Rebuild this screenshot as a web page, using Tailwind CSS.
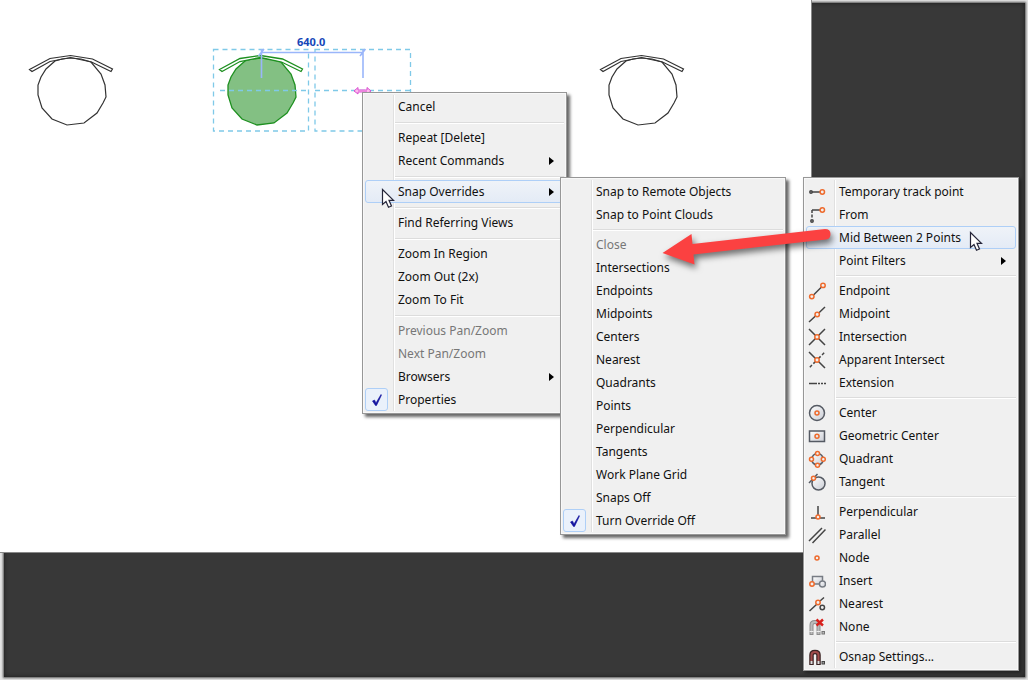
<!DOCTYPE html>
<html lang="en">
<head>
<meta charset="utf-8">
<title>Snap overrides</title>
<script src="https://cdn.jsdelivr.net/npm/@tailwindcss/browser@4"></script>
</head>
<body class="bg-[#e4e4e4] font-['Noto_Sans','Open_Sans',sans-serif] text-[12px] leading-4 text-[#111]">
<main class="relative flex h-screen flex-col overflow-hidden pt-[3px] pr-[3px] pb-[3px] pl-1">
  <div class="grow bg-[#383838] shadow-[0_0_2px_1px_#555] inset-shadow-[0_0_4px_#1c1c1c]"></div>
  <section class="absolute top-0 left-0 right-[216px] bottom-[127px] bg-white border-r border-b border-[#888]" aria-label="Drawing canvas">
    <svg class="block" width="811" height="550" viewBox="0 0 811 550" fill="none" aria-hidden="true">
      <defs>
        <g id="seat"><path d="M55 61 46 69 41 77 38 85V95L42 108 52 119 67 125 84 123 97 113 103 103 106 97 105 85 101 74 91 62 81 59 71 58 62 59Z"/></g>
        <g id="back"><path d="M29.500 69.500 50 58.500 70.500 55.500 92.500 59 112.500 69 111 71.500 91.500 62 70.500 57.500 50 61.500 32 71.500Z"/></g>
      </defs>
      <g stroke="#333" stroke-width="1.2"><use href="#seat"/><use href="#back"/></g>
      <g stroke="#333" stroke-width="1.2" transform="translate(571)"><use href="#seat"/><use href="#back"/></g>
      <g stroke="#1e9020" stroke-width="1.3" transform="translate(190)"><use href="#seat" fill="#83c083"/><use href="#back" fill="#fff"/></g>
      <g stroke="#7fc9e8" stroke-width="1.3" stroke-dasharray="5 4">
        <rect x="213.500" y="49.500" width="95" height="81.500"/>
        <rect x="315" y="49.500" width="95.500" height="81.500"/>
        <path d="M220 90.500H308M315 90.500H410"/>
      </g>
      <g stroke="#9ab6fa" stroke-width="1.6">
        <path d="M261 52.500H363M261.500 49V78M363 49V78M258.500 56 264 49M360 56 365.500 49"/>
      </g>
      <path d="M354 91 358 87.500V90H367V87.500L371 91 367 94V92H358V94Z" stroke="#d94fd0" fill="#fbe" />
      <text x="297" y="46" fill="#1546b8" class="font-['Noto_Sans','Open_Sans',sans-serif] text-[11px] font-bold">640.0</text>
    </svg>
  </section>

  <svg class="absolute size-0">
    <defs>
      <linearGradient id="metal" x1="0" y1="0" x2="1" y2="1"><stop offset="0" stop-color="#fff"/><stop offset="1" stop-color="#c9ccd4"/></linearGradient>
      <symbol id="cursor" viewBox="0 0 14 21"><path d="M1.500 1.500V16.500L5 13.500 7.500 19.300 10.500 18 8 12.300H12.500Z" fill="#fff" stroke="#26263a" stroke-width="1.200"/></symbol>
      <symbol id="check" viewBox="0 0 12 14"><path d="M1.500 8 3.500 7 5 10 10 1.500 10.500 2 5.500 12.500H4.500Z" fill="#1414a0" stroke="#1414a0" stroke-width=".6"/></symbol>
    </defs>
  </svg>

  <!-- Context menu -->
  <div role="menu" aria-label="Context menu" class="absolute top-[92px] left-[362px] w-[205px] border border-[#979797] bg-[#f0f0f0] p-0.5 shadow-[3px_3px_3px_#0009] inset-shadow-[0_0_0_1px_#f8f8f8]">
    <div class="absolute inset-y-0.5 left-[30px] w-0.5 border-l border-[#e0e0e0] bg-white"></div>
    <button role="menuitem" class="relative flex h-[23px] w-full items-center pl-[33px]">Cancel</button>
    <hr class="relative mt-1 mb-0.5 ml-[30px] h-0.5 border-t border-[#dcdcdc] bg-white">
    <button role="menuitem" class="relative flex h-[23px] w-full items-center pl-[33px]">Repeat [Delete]</button>
    <button role="menuitem" class="relative flex h-[23px] w-full items-center justify-between pr-2.5 pl-[33px]">Recent Commands<svg width="5" height="8" viewBox="0 0 5 8"><path d="M0 0 5 4 0 8Z"/></svg></button>
    <hr class="relative mt-1 mb-0.5 ml-[30px] h-0.5 border-t border-[#dcdcdc] bg-white">
    <button role="menuitem" class="relative flex h-[23px] w-full items-center justify-between rounded-[3px] border border-[#aecff7] bg-linear-to-b from-[#eff3f8] to-[#e4ebf6] pr-[9px] pl-8">Snap Overrides<svg width="5" height="8" viewBox="0 0 5 8"><path d="M0 0 5 4 0 8Z"/></svg></button>
    <hr class="relative mt-1 mb-0.5 ml-[30px] h-0.5 border-t border-[#dcdcdc] bg-white">
    <button role="menuitem" class="relative flex h-[23px] w-full items-center pl-[33px]">Find Referring Views</button>
    <hr class="relative mt-1 mb-0.5 ml-[30px] h-0.5 border-t border-[#dcdcdc] bg-white">
    <button role="menuitem" class="relative flex h-[23px] w-full items-center pl-[33px]">Zoom In Region</button>
    <button role="menuitem" class="relative flex h-[23px] w-full items-center pl-[33px]">Zoom Out (2x)</button>
    <button role="menuitem" class="relative flex h-[23px] w-full items-center pl-[33px]">Zoom To Fit</button>
    <hr class="relative mt-1 mb-0.5 ml-[30px] h-0.5 border-t border-[#dcdcdc] bg-white">
    <button role="menuitem" disabled class="relative flex h-[23px] w-full items-center pl-[33px] text-[#777]">Previous Pan/Zoom</button>
    <button role="menuitem" disabled class="relative flex h-[23px] w-full items-center pl-[33px] text-[#777]">Next Pan/Zoom</button>
    <button role="menuitem" class="relative flex h-[23px] w-full items-center justify-between pr-2.5 pl-[33px]">Browsers<svg width="5" height="8" viewBox="0 0 5 8"><path d="M0 0 5 4 0 8Z"/></svg></button>
    <button role="menuitemcheckbox" aria-checked="true" class="relative flex h-[23px] w-full items-center gap-2.5"><span class="flex size-[23px] items-center justify-center rounded-[3px] border border-[#aecff7] bg-[#eaf1fb]"><svg width="12" height="14"><use href="#check"/></svg></span>Properties</button>
  </div>

  <!-- Snap overrides submenu -->
  <div role="menu" aria-label="Snap Overrides" class="absolute top-[177px] left-[560px] w-[226px] border border-[#979797] bg-[#f0f0f0] p-0.5 shadow-[3px_3px_3px_#0009] inset-shadow-[0_0_0_1px_#f8f8f8]">
    <div class="absolute inset-y-0.5 left-[30px] w-0.5 border-l border-[#e0e0e0] bg-white"></div>
    <button role="menuitem" class="relative flex h-[23px] w-full items-center pl-[33px]">Snap to Remote Objects</button>
    <button role="menuitem" class="relative flex h-[23px] w-full items-center pl-[33px]">Snap to Point Clouds</button>
    <hr class="relative mt-[3px] mb-0.5 ml-[30px] h-0.5 border-t border-[#dcdcdc] bg-white">
    <button role="menuitem" disabled class="relative flex h-[23px] w-full items-center pl-[33px] text-[#777]">Close</button>
    <button role="menuitem" class="relative flex h-[23px] w-full items-center pl-[33px]">Intersections</button>
    <button role="menuitem" class="relative flex h-[23px] w-full items-center pl-[33px]">Endpoints</button>
    <button role="menuitem" class="relative flex h-[23px] w-full items-center pl-[33px]">Midpoints</button>
    <button role="menuitem" class="relative flex h-[23px] w-full items-center pl-[33px]">Centers</button>
    <button role="menuitem" class="relative flex h-[23px] w-full items-center pl-[33px]">Nearest</button>
    <button role="menuitem" class="relative flex h-[23px] w-full items-center pl-[33px]">Quadrants</button>
    <button role="menuitem" class="relative flex h-[23px] w-full items-center pl-[33px]">Points</button>
    <button role="menuitem" class="relative flex h-[23px] w-full items-center pl-[33px]">Perpendicular</button>
    <button role="menuitem" class="relative flex h-[23px] w-full items-center pl-[33px]">Tangents</button>
    <button role="menuitem" class="relative flex h-[23px] w-full items-center pl-[33px]">Work Plane Grid</button>
    <button role="menuitem" class="relative flex h-[23px] w-full items-center pl-[33px]">Snaps Off</button>
    <button role="menuitemcheckbox" aria-checked="true" class="relative flex h-[23px] w-full items-center gap-2.5"><span class="flex size-[23px] items-center justify-center rounded-[3px] border border-[#aecff7] bg-[#eaf1fb]"><svg width="12" height="14"><use href="#check"/></svg></span>Turn Override Off</button>
  </div>

  <!-- Object snap menu -->
  <div role="menu" aria-label="Object snap" class="absolute top-[177px] left-[803px] w-[216px] border border-[#979797] bg-[#f0f0f0] p-0.5 shadow-[2px_2px_3px_#0006] inset-shadow-[0_0_0_1px_#f8f8f8]">
    <div class="absolute inset-y-0.5 left-[30px] w-0.5 border-l border-[#e0e0e0] bg-white"></div>
    <button role="menuitem" class="relative flex h-[23px] w-full items-center gap-[13px] pl-0.5"><svg width="18" height="18" fill="none" stroke="#444" stroke-width="1.5"><path d="M4 9H12"/><circle cx="3" cy="9" r="1.200"/><circle cx="14.300" cy="9" r="2.200" stroke="#ee6a2c"/></svg>Temporary track point</button>
    <button role="menuitem" class="relative flex h-[23px] w-full items-center gap-[13px] pl-0.5"><svg width="18" height="18" fill="none" stroke="#444" stroke-width="1.500"><path d="M12 4H4"/><path d="M4 4V13" stroke-dasharray="3 1.500"/><circle cx="4" cy="15" r="1.200"/><circle cx="14.300" cy="4" r="2.200" stroke="#ee6a2c"/></svg>From</button>
    <button role="menuitem" class="relative flex h-[23px] w-full items-center rounded-[3px] border border-[#aecff7] bg-linear-to-b from-[#eff3f8] to-[#e4ebf6] pl-8">Mid Between 2 Points</button>
    <button role="menuitem" class="relative flex h-[23px] w-full items-center justify-between pr-2.5 pl-[33px]">Point Filters<svg width="5" height="8" viewBox="0 0 5 8"><path d="M0 0 5 4 0 8Z"/></svg></button>
    <hr class="relative mt-[3px] mb-0.5 ml-[30px] h-0.5 border-t border-[#dcdcdc] bg-white">
    <button role="menuitem" class="relative flex h-[23px] w-full items-center gap-[13px] pl-0.5"><svg width="18" height="18" fill="none" stroke="#444" stroke-width="1.500"><path d="M5.500 13 13.500 5"/><g stroke="#ee6a2c"><circle cx="3.800" cy="14.600" r="2.200"/><circle cx="15" cy="3.400" r="2.200"/></g></svg>Endpoint</button>
    <button role="menuitem" class="relative flex h-[23px] w-full items-center gap-[13px] pl-0.5"><svg width="18" height="18" fill="none" stroke="#444" stroke-width="1.500"><path d="M1 17 7.500 11M11 7.700 17 2"/><circle cx="9.200" cy="9.500" r="2.200" stroke="#ee6a2c"/></svg>Midpoint</button>
    <button role="menuitem" class="relative flex h-[23px] w-full items-center gap-[13px] pl-0.5"><svg width="18" height="18" fill="none" stroke="#444" stroke-width="1.500"><path d="M1 1 7.500 7.500M10.500 10.500 17 17M1 17 7.500 10.500M10.500 7.500 17 1"/><circle cx="9" cy="9" r="2.200" stroke="#ee6a2c"/></svg>Intersection</button>
    <button role="menuitem" class="relative flex h-[23px] w-full items-center gap-[13px] pl-0.5"><svg width="18" height="18" fill="none" stroke="#444" stroke-width="1.500"><path d="M1 1 7.500 7.500M10.500 10.500 17 17"/><path d="M7.500 10.500 1 17M10.500 7.500 17 1" stroke-dasharray="3 2"/><circle cx="9" cy="9" r="2.200" stroke="#ee6a2c"/></svg>Apparent Intersect</button>
    <button role="menuitem" class="relative flex h-[23px] w-full items-center gap-[13px] pl-0.5"><svg width="18" height="18" fill="none" stroke="#444" stroke-width="1.500"><path d="M1 9.500H9"/><path d="M10 9.500H18" stroke-dasharray="2 1"/></svg>Extension</button>
    <hr class="relative mt-[3px] mb-0.5 ml-[30px] h-0.5 border-t border-[#dcdcdc] bg-white">
    <button role="menuitem" class="relative flex h-[23px] w-full items-center gap-[13px] pl-0.5"><svg width="18" height="18" fill="none" stroke="#555a63" stroke-width="1.500"><circle cx="9" cy="9" r="7.500" fill="url(#metal)"/><circle cx="9" cy="9" r="2" stroke="#ee6a2c"/></svg>Center</button>
    <button role="menuitem" class="relative flex h-[23px] w-full items-center gap-[13px] pl-0.5"><svg width="18" height="18" fill="none" stroke="#555a63" stroke-width="1.500"><rect x="1.500" y="4" width="15" height="10.500" fill="url(#metal)"/><circle cx="9" cy="9.300" r="2" stroke="#ee6a2c"/></svg>Geometric Center</button>
    <button role="menuitem" class="relative flex h-[23px] w-full items-center gap-[13px] pl-0.5"><svg width="18" height="18" stroke="#555a63" stroke-width="1.500"><circle cx="9.500" cy="9.300" r="5.800" fill="url(#metal)"/><g stroke="#ee6a2c" fill="#f0f0f0"><circle cx="9.500" cy="3.500" r="2"/><circle cx="9.500" cy="15.200" r="2"/><circle cx="3.500" cy="9.300" r="2"/><circle cx="15.300" cy="9.300" r="2"/></g></svg>Quadrant</button>
    <button role="menuitem" class="relative flex h-[23px] w-full items-center gap-[13px] pl-0.5"><svg width="18" height="18" stroke="#555a63" stroke-width="1.500"><circle cx="10.500" cy="10.500" r="6.500" fill="url(#metal)"/><path d="M1 10 9.500 1"/><circle cx="5.500" cy="5.300" r="2" fill="#f0f0f0" stroke="#ee6a2c"/></svg>Tangent</button>
    <hr class="relative mt-[3px] mb-0.5 ml-[30px] h-0.5 border-t border-[#dcdcdc] bg-white">
    <button role="menuitem" class="relative flex h-[23px] w-full items-center gap-[13px] pl-0.5"><svg width="18" height="18" fill="none" stroke="#444" stroke-width="1.500"><path d="M10 3V12M3 15H8M12 15H17"/><circle cx="10" cy="14" r="2" stroke="#ee6a2c"/></svg>Perpendicular</button>
    <button role="menuitem" class="relative flex h-[23px] w-full items-center gap-[13px] pl-0.5"><svg width="18" height="18" fill="none" stroke="#444" stroke-width="1.500"><path d="M1 15 14 2M4.500 17 17.500 3.500"/></svg>Parallel</button>
    <button role="menuitem" class="relative flex h-[23px] w-full items-center gap-[13px] pl-0.5"><svg width="18" height="18" fill="none" stroke="#ee6a2c" stroke-width="1.500"><circle cx="9" cy="9" r="2"/></svg>Node</button>
    <button role="menuitem" class="relative flex h-[23px] w-full items-center gap-[13px] pl-0.5"><svg width="18" height="18" stroke="#777c84" stroke-width="1.500"><path d="M4.500 10V4.500H14.500V12H6" fill="url(#metal)"/><circle cx="14.500" cy="12" r="3" fill="url(#metal)"/><circle cx="4" cy="12" r="2.200" fill="#f0f0f0" stroke="#ee6a2c"/></svg>Insert</button>
    <button role="menuitem" class="relative flex h-[23px] w-full items-center gap-[13px] pl-0.5"><svg width="18" height="18" fill="none" stroke="#444" stroke-width="1.500"><path d="M1.500 16 8.500 9.500M12 6 16 2.500"/><circle cx="14.300" cy="12.500" r="2.200"/><circle cx="10" cy="7.500" r="2.200" stroke="#ee6a2c"/></svg>Nearest</button>
    <button role="menuitem" class="relative flex h-[23px] w-full items-center gap-[13px] pl-0.5"><svg width="18" height="18" fill="none"><path d="M3.500 17V7Q3.500 4 7 4T10.500 7V17" stroke="#8d8d8d" stroke-width="4"/><path d="M3.500 16V7Q3.500 4 7 4T10.500 7V16" stroke="#bbb" stroke-width="2"/><path d="M1.500 13.500H5.500M8.500 13.500H12.500" stroke="#eee"/><path d="M8.500 1.500 15 7.500M15 1.500 8.500 7.500" stroke="#d8201c" stroke-width="2.400"/><rect x="14" y="13.500" width="2.500" height="2.500" fill="#bbb" stroke="#777"/></svg>None</button>
    <hr class="relative mt-[3px] mb-0.5 ml-[30px] h-0.5 border-t border-[#dcdcdc] bg-white">
    <button role="menuitem" class="relative flex h-[23px] w-full items-center gap-[13px] pl-0.5"><svg width="18" height="18" fill="none"><path d="M3.500 17V7Q3.500 4 7 4T10.500 7V17" stroke="#3a2222" stroke-width="4.500"/><path d="M3.500 13V7Q3.500 4 7 4T10.500 7V13" stroke="#a04a4a" stroke-width="2"/><path d="M3.500 13V16M10.500 13V16" stroke="#ddd" stroke-width="2"/><rect x="14" y="13.500" width="2.500" height="2.500" fill="#999" stroke="#444"/></svg>Osnap Settings...</button>
  </div>

  <!-- Pointers and callout arrow -->
  <svg class="pointer-events-none absolute top-[188px] left-[381px]" width="14" height="21" aria-hidden="true"><use href="#cursor"/></svg>
  <svg class="pointer-events-none absolute top-[231px] left-[969px]" width="14" height="21" aria-hidden="true"><use href="#cursor"/></svg>
  <svg class="pointer-events-none absolute top-[225px] left-[655px] drop-shadow-[2px_4px_3px_#0008]" width="180" height="48" aria-hidden="true"><path d="M7.500 28 36.500 9 37.500 19 170 4Q175.500 4 175.500 9T171 14.500L38.500 29.500 39.500 39.500Z" fill="#fb4141"/></svg>
</main>
</body>
</html>
